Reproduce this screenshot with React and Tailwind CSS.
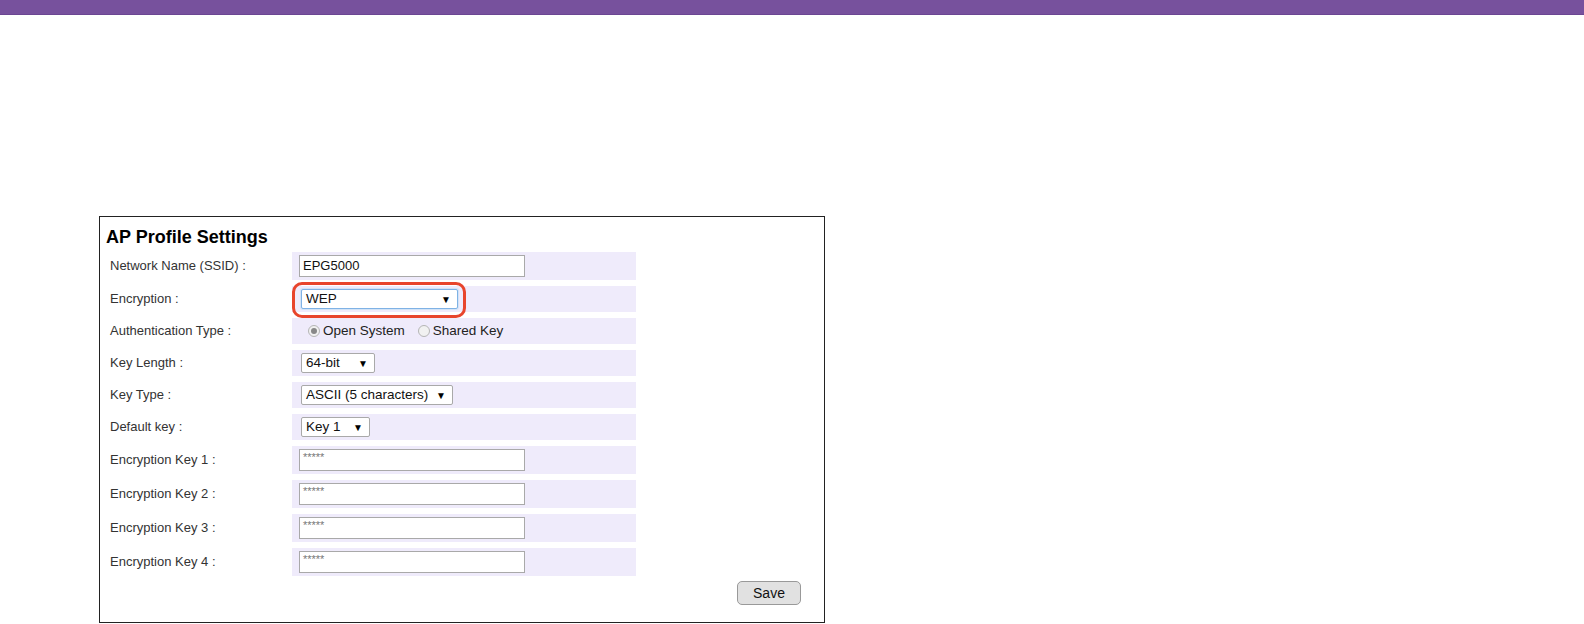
import React from 'react';

const font = { fontFamily: '"Liberation Sans", Arial, sans-serif' };

const TextBox = ({ value, masked }) => (
  <div
    className={
      'w-[226px] h-[22px] bg-white border border-[#a9a9a9] flex px-[3px] ' +
      (masked ? 'items-start pt-[2px] text-[11px] leading-[11px] text-[#777]' : 'items-center text-[13px] text-[#111]')
    }
  >
    {value}
  </div>
);

const Dropdown = ({ value, width, focused }) => (
  <div
    className={
      'h-[20px] bg-white flex items-center justify-between pl-[4px] pr-[6px] text-[13.5px] text-[#111] rounded-[2px] ' +
      width +
      (focused ? ' border border-[#7fb2e5] shadow-[0_0_1px_1px_#cfe3f7]' : ' border border-[#a9a9a9]')
    }
  >
    <span>{value}</span>
    <span className="text-[10px] text-black">▼</span>
  </div>
);

const Radio = ({ checked, label }) => (
  <label className="flex items-center gap-[3px]">
    <span className="w-[12px] h-[12px] rounded-full border border-[#b5b5b5] bg-[#f1f1f1] flex items-center justify-center">
      {checked && <span className="w-[6px] h-[6px] rounded-full bg-[#888]" />}
    </span>
    <span className="text-[13.5px] text-[#222]">{label}</span>
  </label>
);

const rows = [
  { label: 'Network Name (SSID) :', h: 'h-[28px]', pad: 'pl-[7px]', field: <TextBox value="EPG5000" /> },
  {
    label: 'Encryption :',
    h: 'h-[26px]',
    pad: 'pl-[9px]',
    field: (
      <div className="relative">
        <Dropdown value="WEP" width="w-[157px]" focused />
        <div className="absolute -left-[9px] -top-[7px] w-[174px] h-[36px] border-[3px] border-[#e8452c] rounded-[10px]" />
      </div>
    ),
  },
  {
    label: 'Authentication Type :',
    h: 'h-[26px]',
    pad: 'pl-[16px]',
    field: (
      <div className="flex items-center gap-[13px]">
        <Radio checked label="Open System" />
        <Radio label="Shared Key" />
      </div>
    ),
  },
  { label: 'Key Length :', h: 'h-[26px]', pad: 'pl-[9px]', field: <Dropdown value="64-bit" width="w-[74px]" /> },
  { label: 'Key Type :', h: 'h-[26px]', pad: 'pl-[9px]', field: <Dropdown value="ASCII (5 characters)" width="w-[152px]" /> },
  { label: 'Default key :', h: 'h-[26px]', pad: 'pl-[9px]', field: <Dropdown value="Key 1" width="w-[69px]" /> },
  { label: 'Encryption Key 1 :', h: 'h-[28px]', pad: 'pl-[7px]', field: <TextBox value="*****" masked /> },
  { label: 'Encryption Key 2 :', h: 'h-[28px]', pad: 'pl-[7px]', field: <TextBox value="*****" masked /> },
  { label: 'Encryption Key 3 :', h: 'h-[28px]', pad: 'pl-[7px]', field: <TextBox value="*****" masked /> },
  { label: 'Encryption Key 4 :', h: 'h-[28px]', pad: 'pl-[7px]', field: <TextBox value="*****" masked /> },
];

export default function App() {
  return (
    <div className="min-h-[624px] bg-white" style={font}>
      <div className="h-[15px] bg-[#77519d] border-b border-[#6b4692]" />

      <div className="ml-[99px] mt-[201px] w-[726px] border border-[#222] bg-white pb-[17px]">
        <h2 className="pl-[6px] pt-[10px] text-[18px] leading-[21px] font-bold text-black">AP Profile Settings</h2>

        <div className="mt-[4px] flex flex-col gap-[6px] pl-[10px]">
          {rows.map((row) => (
            <div key={row.label} className={'flex ' + row.h}>
              <div className="w-[182px] flex items-center text-[13px] text-[#333]">{row.label}</div>
              <div className={'w-[344px] bg-[#efebfb] flex items-center ' + row.pad}>{row.field}</div>
            </div>
          ))}
        </div>

        <div className="flex justify-end pr-[23px] mt-[5px]">
          <button className="w-[64px] h-[24px] rounded-[5px] border border-[#999] bg-[#e1e1e1] text-[14px] text-[#111]">
            Save
          </button>
        </div>
      </div>
    </div>
  );
}
